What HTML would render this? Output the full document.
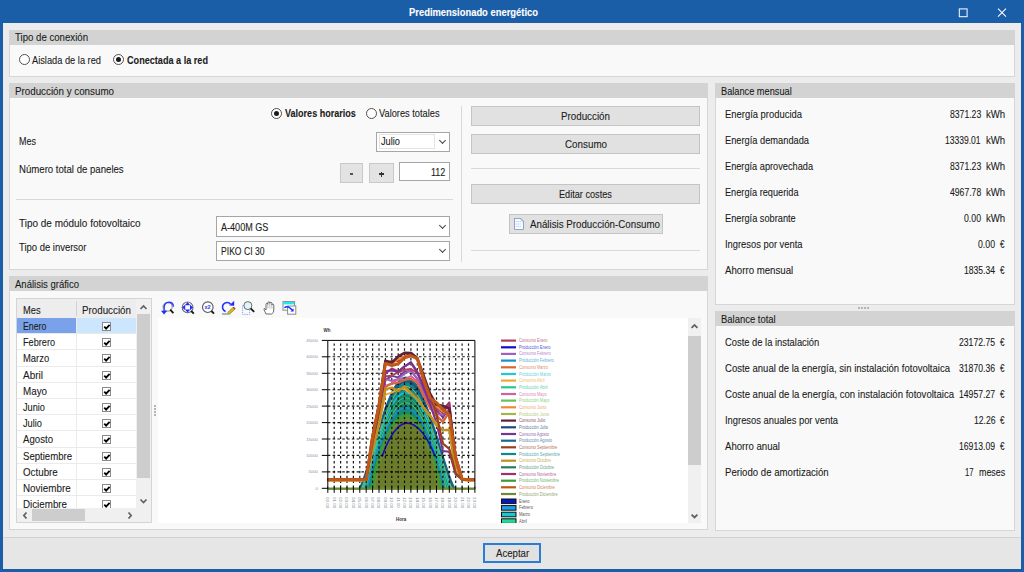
<!DOCTYPE html>
<html><head><meta charset="utf-8">
<style>
*{margin:0;padding:0;box-sizing:border-box}
html,body{width:1024px;height:572px;overflow:hidden;background:#1a5ea8}
body{position:relative;font-family:"Liberation Sans",sans-serif;font-size:11px;color:#1b1b1b;letter-spacing:0}
.a{position:absolute}
.t{position:absolute;white-space:nowrap;line-height:1;-webkit-text-stroke:0.1px currentColor}
#win{position:absolute;left:3px;top:23px;width:1018px;height:546px;background:#ececec}
.grp{position:absolute;background:#f9f9f9;border:1px solid #d9d9d9}
.hdr{position:absolute;left:0;top:0;right:0;height:15px;background:#d3d3d3}
.btn{position:absolute;background:#e1e1e1;border:1px solid #adadad;text-align:center}
.cb{position:absolute;background:#fff;border:1px solid #a8a8a8}
.line{position:absolute;background:#d6d6d6}
.radio{position:absolute;width:11px;height:11px;border:1px solid #505050;border-radius:50%;background:#fff}
.radio.on::after{content:"";position:absolute;left:2px;top:2px;width:5px;height:5px;border-radius:50%;background:#1b1b1b}
.chev{position:absolute;width:5px;height:5px;border-right:1px solid #444;border-bottom:1px solid #444;transform:rotate(45deg)}
</style></head><body>

<div class="a" style="left:3px;top:23px;width:1018px;height:546px;background:#ececec"></div>
<div class="t" style="left:409.00px;top:8.00px;transform-origin:0 50%;transform:scaleX(0.9399);font-size:10px;font-weight:bold;color:#fff;">Predimensionado energético</div>
<svg class="a" style="left:958px;top:8px" width="11" height="11"><rect x="1.3" y="0.9" width="7.8" height="7.8" fill="none" stroke="#fff" stroke-width="1"/></svg>
<svg class="a" style="left:997px;top:8px" width="10" height="10"><path d="M1 0.6L9 8.6M9 0.6L1 8.6" stroke="#fff" stroke-width="1.05"/></svg>
<div class="a" style="left:9px;top:30px;width:1006px;height:47px;background:#f9f9f9;border:1px solid #d6d6d6"></div>
<div class="a" style="left:9px;top:30px;width:1006px;height:15px;background:#d3d3d3"></div>
<div class="t" style="left:15.00px;top:32.00px;transform-origin:0 50%;transform:scaleX(0.8756);">Tipo de conexión</div>
<div class="radio" style="left:19px;top:54px"></div>
<div class="t" style="left:32.00px;top:55.00px;transform-origin:0 50%;transform:scaleX(0.8421);">Aislada de la red</div>
<div class="radio on" style="left:113px;top:54px"></div>
<div class="t" style="left:127.00px;top:55.00px;transform-origin:0 50%;transform:scaleX(0.8281);font-weight:bold;">Conectada a la red</div>
<div class="a" style="left:9px;top:83px;width:699px;height:187px;background:#f9f9f9;border:1px solid #d6d6d6"></div>
<div class="a" style="left:9px;top:83px;width:699px;height:15px;background:#d3d3d3"></div>
<div class="t" style="left:15.00px;top:86.00px;transform-origin:0 50%;transform:scaleX(0.8894);">Producción y consumo</div>
<div class="radio on" style="left:271px;top:108px"></div>
<div class="t" style="left:284.60px;top:108.00px;transform-origin:0 50%;transform:scaleX(0.8215);font-weight:bold;">Valores horarios</div>
<div class="radio" style="left:366px;top:108px"></div>
<div class="t" style="left:379.00px;top:108.00px;transform-origin:0 50%;transform:scaleX(0.8410);">Valores totales</div>
<div class="t" style="left:19.00px;top:136.00px;transform-origin:0 50%;transform:scaleX(0.8168);">Mes</div>
<div class="t" style="left:19.00px;top:164.00px;transform-origin:0 50%;transform:scaleX(0.8734);">Número total de paneles</div>
<div class="a" style="left:376px;top:132px;width:74px;height:20px;background:#fff;border:1px solid #a6a6a6"></div>
<div class="a" style="left:379px;top:134px;width:56px;height:15px;border:1px solid #e3e3e3"></div>
<div class="t" style="left:381.40px;top:136.00px;transform-origin:0 50%;transform:scaleX(0.8398);">Julio</div>
<div class="chev" style="left:440px;top:138px"></div>
<div class="a" style="left:340px;top:163px;width:23px;height:20px;background:#e3e3e3;border:1px solid #c8c8c8"></div>
<div class="a" style="left:350px;top:173px;width:3px;height:2px;background:#555"></div>
<div class="a" style="left:369px;top:163px;width:25px;height:20px;background:#e3e3e3;border:1px solid #c8c8c8"></div>
<div class="a" style="left:379px;top:173.3px;width:5px;height:1.6px;background:#333"></div>
<div class="a" style="left:380.7px;top:171.6px;width:1.6px;height:5px;background:#333"></div>
<div class="a" style="left:399px;top:162px;width:51px;height:19px;background:#fff;border:1px solid #a6a6a6"></div>
<div class="t" style="left:431.20px;top:167.00px;transform-origin:0 50%;transform:scaleX(0.8199);">112</div>
<div class="a" style="left:16px;top:199px;width:437px;height:1px;background:#d9d9d9"></div>
<div class="t" style="left:19.00px;top:218.00px;transform-origin:0 50%;transform:scaleX(0.9066);">Tipo de módulo fotovoltaico</div>
<div class="t" style="left:19.00px;top:242.00px;transform-origin:0 50%;transform:scaleX(0.8606);">Tipo de inversor</div>
<div class="a" style="left:216px;top:216px;width:234px;height:21px;background:#fff;border:1px solid #a6a6a6"></div>
<div class="t" style="left:221.30px;top:222.00px;transform-origin:0 50%;transform:scaleX(0.8235);">A-400M GS</div>
<div class="chev" style="left:440px;top:223px"></div>
<div class="a" style="left:216px;top:241px;width:234px;height:20px;background:#fff;border:1px solid #a6a6a6"></div>
<div class="t" style="left:221.30px;top:246.00px;transform-origin:0 50%;transform:scaleX(0.7820);">PIKO CI 30</div>
<div class="chev" style="left:440px;top:247px"></div>
<div class="a" style="left:461px;top:106px;width:1px;height:156px;background:#d9d9d9"></div>
<div class="a" style="left:471px;top:106px;width:229px;height:20px;background:#e1e1e1;border:1px solid #c4c4c4"></div>
<div class="t" style="left:561.00px;top:111.00px;transform-origin:0 50%;transform:scaleX(0.8899);">Producción</div>
<div class="a" style="left:471px;top:134px;width:229px;height:20px;background:#e1e1e1;border:1px solid #c4c4c4"></div>
<div class="t" style="left:564.50px;top:139.00px;transform-origin:0 50%;transform:scaleX(0.8924);">Consumo</div>
<div class="a" style="left:471px;top:168px;width:229px;height:1px;background:#d9d9d9"></div>
<div class="a" style="left:471px;top:184px;width:229px;height:20px;background:#e1e1e1;border:1px solid #c4c4c4"></div>
<div class="t" style="left:559.10px;top:189.00px;transform-origin:0 50%;transform:scaleX(0.8307);">Editar costes</div>
<div class="a" style="left:509px;top:214px;width:154px;height:20px;background:#e1e1e1;border:1px solid #c4c4c4"></div>
<svg class="a" style="left:513px;top:217px" width="12" height="14"><path d="M1.5 1.5H7.5L10.5 4.5V11.8Q10.5 12.5 9.8 12.5H2.2Q1.5 12.5 1.5 11.8Z" fill="#f8fbff" stroke="#8ea6cc" stroke-width="1.1"/><path d="M3 4.5H8.5M3 7H8.5M3 9.5H8.5" stroke="#b4c4dc" stroke-width="0.8" stroke-dasharray="1.2,0.6"/></svg>
<div class="t" style="left:529.60px;top:219.00px;transform-origin:0 50%;transform:scaleX(0.8859);">Análisis Producción-Consumo</div>
<div class="a" style="left:471px;top:250px;width:229px;height:1px;background:#d9d9d9"></div>
<div class="a" style="left:715px;top:83px;width:300px;height:222px;background:#f9f9f9;border:1px solid #d6d6d6"></div>
<div class="a" style="left:715px;top:83px;width:300px;height:15px;background:#d3d3d3"></div>
<div class="t" style="left:721.00px;top:86.00px;transform-origin:0 50%;transform:scaleX(0.8379);">Balance mensual</div>
<div class="t" style="left:725.00px;top:109.00px;transform-origin:0 50%;transform:scaleX(0.8562);">Energía producida</div>
<div class="t" style="left:949.60px;top:109.00px;transform-origin:0 50%;transform:scaleX(0.7849);">8371.23</div>
<div class="t" style="left:985.70px;top:109.00px;transform-origin:0 50%;transform:scaleX(0.8727);">kWh</div>
<div class="t" style="left:725.00px;top:135.00px;transform-origin:0 50%;transform:scaleX(0.8426);">Energía demandada</div>
<div class="t" style="left:945.20px;top:135.00px;transform-origin:0 50%;transform:scaleX(0.7760);">13339.01</div>
<div class="t" style="left:985.70px;top:135.00px;transform-origin:0 50%;transform:scaleX(0.8727);">kWh</div>
<div class="t" style="left:725.00px;top:161.00px;transform-origin:0 50%;transform:scaleX(0.8366);">Energía aprovechada</div>
<div class="t" style="left:949.60px;top:161.00px;transform-origin:0 50%;transform:scaleX(0.7849);">8371.23</div>
<div class="t" style="left:985.70px;top:161.00px;transform-origin:0 50%;transform:scaleX(0.8727);">kWh</div>
<div class="t" style="left:725.00px;top:187.00px;transform-origin:0 50%;transform:scaleX(0.8346);">Energía requerida</div>
<div class="t" style="left:949.60px;top:187.00px;transform-origin:0 50%;transform:scaleX(0.7849);">4967.78</div>
<div class="t" style="left:985.70px;top:187.00px;transform-origin:0 50%;transform:scaleX(0.8727);">kWh</div>
<div class="t" style="left:725.00px;top:213.00px;transform-origin:0 50%;transform:scaleX(0.8379);">Energía sobrante</div>
<div class="t" style="left:963.80px;top:213.00px;transform-origin:0 50%;transform:scaleX(0.7930);">0.00</div>
<div class="t" style="left:985.70px;top:213.00px;transform-origin:0 50%;transform:scaleX(0.8727);">kWh</div>
<div class="t" style="left:725.00px;top:239.00px;transform-origin:0 50%;transform:scaleX(0.8505);">Ingresos por venta</div>
<div class="t" style="left:978.10px;top:239.00px;transform-origin:0 50%;transform:scaleX(0.7930);">0.00</div>
<div class="t" style="left:1000.40px;top:239.00px;transform-origin:0 50%;transform:scaleX(0.7347);">€</div>
<div class="t" style="left:725.00px;top:265.00px;transform-origin:0 50%;transform:scaleX(0.8786);">Ahorro mensual</div>
<div class="t" style="left:964.10px;top:265.00px;transform-origin:0 50%;transform:scaleX(0.7799);">1835.34</div>
<div class="t" style="left:1000.40px;top:265.00px;transform-origin:0 50%;transform:scaleX(0.7347);">€</div>
<div class="a" style="left:858px;top:307px;width:2px;height:2px;background:#b4b4b4"></div>
<div class="a" style="left:861px;top:307px;width:2px;height:2px;background:#b4b4b4"></div>
<div class="a" style="left:864px;top:307px;width:2px;height:2px;background:#b4b4b4"></div>
<div class="a" style="left:867px;top:307px;width:2px;height:2px;background:#b4b4b4"></div>
<div class="a" style="left:715px;top:311px;width:300px;height:220px;background:#f9f9f9;border:1px solid #d6d6d6"></div>
<div class="a" style="left:715px;top:311px;width:300px;height:15px;background:#d3d3d3"></div>
<div class="t" style="left:721.00px;top:314.00px;transform-origin:0 50%;transform:scaleX(0.8597);">Balance total</div>
<div class="t" style="left:724.70px;top:337.00px;transform-origin:0 50%;transform:scaleX(0.8519);">Coste de la instalación</div>
<div class="t" style="left:959.10px;top:337.00px;transform-origin:0 50%;transform:scaleX(0.7847);">23172.75</div>
<div class="t" style="left:1000.40px;top:337.00px;transform-origin:0 50%;transform:scaleX(0.7347);">€</div>
<div class="t" style="left:724.70px;top:363.00px;transform-origin:0 50%;transform:scaleX(0.8656);">Coste anual de la energía, sin instalación fotovoltaica</div>
<div class="t" style="left:959.10px;top:363.00px;transform-origin:0 50%;transform:scaleX(0.7847);">31870.36</div>
<div class="t" style="left:1000.40px;top:363.00px;transform-origin:0 50%;transform:scaleX(0.7347);">€</div>
<div class="t" style="left:724.70px;top:389.00px;transform-origin:0 50%;transform:scaleX(0.8689);">Coste anual de la energía, con instalación fotovoltaica</div>
<div class="t" style="left:959.10px;top:389.00px;transform-origin:0 50%;transform:scaleX(0.7847);">14957.27</div>
<div class="t" style="left:1000.40px;top:389.00px;transform-origin:0 50%;transform:scaleX(0.7347);">€</div>
<div class="t" style="left:724.70px;top:415.00px;transform-origin:0 50%;transform:scaleX(0.8516);">Ingresos anuales por venta</div>
<div class="t" style="left:973.60px;top:415.00px;transform-origin:0 50%;transform:scaleX(0.7818);">12.26</div>
<div class="t" style="left:1000.40px;top:415.00px;transform-origin:0 50%;transform:scaleX(0.7347);">€</div>
<div class="t" style="left:724.70px;top:441.00px;transform-origin:0 50%;transform:scaleX(0.8730);">Ahorro anual</div>
<div class="t" style="left:959.10px;top:441.00px;transform-origin:0 50%;transform:scaleX(0.7847);">16913.09</div>
<div class="t" style="left:1000.40px;top:441.00px;transform-origin:0 50%;transform:scaleX(0.7347);">€</div>
<div class="t" style="left:724.70px;top:467.00px;transform-origin:0 50%;transform:scaleX(0.8742);">Periodo de amortización</div>
<div class="t" style="left:964.50px;top:467.00px;transform-origin:0 50%;transform:scaleX(0.7020);">17</div>
<div class="t" style="left:978.70px;top:467.00px;transform-origin:0 50%;transform:scaleX(0.8093);">meses</div>
<div class="a" style="left:9px;top:276px;width:699px;height:254px;background:#f9f9f9;border:1px solid #d6d6d6"></div>
<div class="a" style="left:9px;top:276px;width:699px;height:15px;background:#d3d3d3"></div>
<div class="t" style="left:15.00px;top:279.00px;transform-origin:0 50%;transform:scaleX(0.8649);">Análisis gráfico</div>

<div class="a" style="left:16px;top:298px;width:136px;height:225px;background:#fff;border:1px solid #d4d4d4"></div>
<div class="a" style="left:17px;top:299px;width:119px;height:19px;background:#ededed"></div>
<div class="a" style="left:76px;top:301px;width:1px;height:15px;background:#d2d2d2"></div>
<div class="t" style="left:23.40px;top:305.00px;transform-origin:0 50%;transform:scaleX(0.8456);">Mes</div>
<div class="t" style="left:82.30px;top:305.00px;transform-origin:0 50%;transform:scaleX(0.8899);">Producción</div>
<div class="a" style="left:0;top:0;width:1024px;height:572px;clip-path:inset(317px 888px 64px 17px)">
<div class="a" style="left:17px;top:318px;width:59px;height:16px;background:#7aa2ea"></div>
<div class="a" style="left:76px;top:318px;width:60px;height:16px;background:#cce6fd"></div>
<div class="a" style="left:17px;top:333px;width:119px;height:1px;background:#ebebeb"></div>
<div class="t" style="left:23.30px;top:321.00px;transform-origin:0 50%;transform:scaleX(0.7966);">Enero</div>
<div class="a" style="left:102px;top:321.90px;width:9px;height:9px;border:1px solid #8a8a8a;background:#fff"></div>
<svg class="a" style="left:103px;top:322.90px" width="8" height="8"><path d="M1.3 3.6L3.1 5.6L6.6 1.8" stroke="#000" stroke-width="1.8" fill="none"/></svg>
<div class="a" style="left:17px;top:349px;width:119px;height:1px;background:#ebebeb"></div>
<div class="t" style="left:23.30px;top:337.00px;transform-origin:0 50%;transform:scaleX(0.8312);">Febrero</div>
<div class="a" style="left:102px;top:338.10px;width:9px;height:9px;border:1px solid #8a8a8a;background:#fff"></div>
<svg class="a" style="left:103px;top:339.10px" width="8" height="8"><path d="M1.3 3.6L3.1 5.6L6.6 1.8" stroke="#000" stroke-width="1.8" fill="none"/></svg>
<div class="a" style="left:17px;top:366px;width:119px;height:1px;background:#ebebeb"></div>
<div class="t" style="left:23.30px;top:353.00px;transform-origin:0 50%;transform:scaleX(0.8573);">Marzo</div>
<div class="a" style="left:102px;top:354.30px;width:9px;height:9px;border:1px solid #8a8a8a;background:#fff"></div>
<svg class="a" style="left:103px;top:355.30px" width="8" height="8"><path d="M1.3 3.6L3.1 5.6L6.6 1.8" stroke="#000" stroke-width="1.8" fill="none"/></svg>
<div class="a" style="left:17px;top:382px;width:119px;height:1px;background:#ebebeb"></div>
<div class="t" style="left:23.30px;top:370.00px;transform-origin:0 50%;transform:scaleX(0.9091);">Abril</div>
<div class="a" style="left:102px;top:370.50px;width:9px;height:9px;border:1px solid #8a8a8a;background:#fff"></div>
<svg class="a" style="left:103px;top:371.50px" width="8" height="8"><path d="M1.3 3.6L3.1 5.6L6.6 1.8" stroke="#000" stroke-width="1.8" fill="none"/></svg>
<div class="a" style="left:17px;top:398px;width:119px;height:1px;background:#ebebeb"></div>
<div class="t" style="left:23.30px;top:386.00px;transform-origin:0 50%;transform:scaleX(0.8930);">Mayo</div>
<div class="a" style="left:102px;top:386.70px;width:9px;height:9px;border:1px solid #8a8a8a;background:#fff"></div>
<svg class="a" style="left:103px;top:387.70px" width="8" height="8"><path d="M1.3 3.6L3.1 5.6L6.6 1.8" stroke="#000" stroke-width="1.8" fill="none"/></svg>
<div class="a" style="left:17px;top:414px;width:119px;height:1px;background:#ebebeb"></div>
<div class="t" style="left:23.30px;top:402.00px;transform-origin:0 50%;transform:scaleX(0.8361);">Junio</div>
<div class="a" style="left:102px;top:402.90px;width:9px;height:9px;border:1px solid #8a8a8a;background:#fff"></div>
<svg class="a" style="left:103px;top:403.90px" width="8" height="8"><path d="M1.3 3.6L3.1 5.6L6.6 1.8" stroke="#000" stroke-width="1.8" fill="none"/></svg>
<div class="a" style="left:17px;top:430px;width:119px;height:1px;background:#ebebeb"></div>
<div class="t" style="left:23.30px;top:418.00px;transform-origin:0 50%;transform:scaleX(0.8398);">Julio</div>
<div class="a" style="left:102px;top:419.10px;width:9px;height:9px;border:1px solid #8a8a8a;background:#fff"></div>
<svg class="a" style="left:103px;top:420.10px" width="8" height="8"><path d="M1.3 3.6L3.1 5.6L6.6 1.8" stroke="#000" stroke-width="1.8" fill="none"/></svg>
<div class="a" style="left:17px;top:447px;width:119px;height:1px;background:#ebebeb"></div>
<div class="t" style="left:23.30px;top:434.00px;transform-origin:0 50%;transform:scaleX(0.8759);">Agosto</div>
<div class="a" style="left:102px;top:435.30px;width:9px;height:9px;border:1px solid #8a8a8a;background:#fff"></div>
<svg class="a" style="left:103px;top:436.30px" width="8" height="8"><path d="M1.3 3.6L3.1 5.6L6.6 1.8" stroke="#000" stroke-width="1.8" fill="none"/></svg>
<div class="a" style="left:17px;top:463px;width:119px;height:1px;background:#ebebeb"></div>
<div class="t" style="left:23.30px;top:451.00px;transform-origin:0 50%;transform:scaleX(0.8711);">Septiembre</div>
<div class="a" style="left:102px;top:451.50px;width:9px;height:9px;border:1px solid #8a8a8a;background:#fff"></div>
<svg class="a" style="left:103px;top:452.50px" width="8" height="8"><path d="M1.3 3.6L3.1 5.6L6.6 1.8" stroke="#000" stroke-width="1.8" fill="none"/></svg>
<div class="a" style="left:17px;top:479px;width:119px;height:1px;background:#ebebeb"></div>
<div class="t" style="left:23.30px;top:467.00px;transform-origin:0 50%;transform:scaleX(0.8895);">Octubre</div>
<div class="a" style="left:102px;top:467.70px;width:9px;height:9px;border:1px solid #8a8a8a;background:#fff"></div>
<svg class="a" style="left:103px;top:468.70px" width="8" height="8"><path d="M1.3 3.6L3.1 5.6L6.6 1.8" stroke="#000" stroke-width="1.8" fill="none"/></svg>
<div class="a" style="left:17px;top:495px;width:119px;height:1px;background:#ebebeb"></div>
<div class="t" style="left:23.30px;top:483.00px;transform-origin:0 50%;transform:scaleX(0.8968);">Noviembre</div>
<div class="a" style="left:102px;top:483.90px;width:9px;height:9px;border:1px solid #8a8a8a;background:#fff"></div>
<svg class="a" style="left:103px;top:484.90px" width="8" height="8"><path d="M1.3 3.6L3.1 5.6L6.6 1.8" stroke="#000" stroke-width="1.8" fill="none"/></svg>
<div class="a" style="left:17px;top:511px;width:119px;height:1px;background:#ebebeb"></div>
<div class="t" style="left:23.30px;top:499.00px;transform-origin:0 50%;transform:scaleX(0.8889);">Diciembre</div>
<div class="a" style="left:102px;top:500.10px;width:9px;height:9px;border:1px solid #8a8a8a;background:#fff"></div>
<svg class="a" style="left:103px;top:501.10px" width="8" height="8"><path d="M1.3 3.6L3.1 5.6L6.6 1.8" stroke="#000" stroke-width="1.8" fill="none"/></svg>
<div class="a" style="left:76px;top:317px;width:1px;height:191px;background:#ebebeb"></div>
</div>
<div class="a" style="left:136px;top:299px;width:15px;height:223px;background:#f0f0f0"></div>
<div class="a" style="left:137px;top:314px;width:13px;height:164px;background:#cdcdcd"></div>
<svg class="a" style="left:138px;top:304px" width="11" height="7"><path d="M2.5 5L5.5 2L8.5 5" stroke="#606060" stroke-width="1.7" fill="none"/></svg>
<svg class="a" style="left:138px;top:498px" width="11" height="7"><path d="M2.5 1.5L5.5 4.5L8.5 1.5" stroke="#606060" stroke-width="1.7" fill="none"/></svg>
<div class="a" style="left:17px;top:508px;width:134px;height:14px;background:#f0f0f0"></div>
<div class="a" style="left:32px;top:509px;width:53px;height:12px;background:#cdcdcd"></div>
<svg class="a" style="left:22px;top:511px" width="6" height="9"><path d="M4.5 1.5L1.8 4.5L4.5 7.5" stroke="#606060" stroke-width="1.7" fill="none"/></svg>
<svg class="a" style="left:127px;top:511px" width="6" height="9"><path d="M1.5 1.5L4.2 4.5L1.5 7.5" stroke="#606060" stroke-width="1.7" fill="none"/></svg>
<div class="a" style="left:154px;top:405px;width:2px;height:2px;background:#b4b4b4"></div>
<div class="a" style="left:154px;top:408px;width:2px;height:2px;background:#b4b4b4"></div>
<div class="a" style="left:154px;top:411px;width:2px;height:2px;background:#b4b4b4"></div>
<div class="a" style="left:154px;top:414px;width:2px;height:2px;background:#b4b4b4"></div>
<div class="a" style="left:158px;top:318px;width:530px;height:205px;background:#fff"></div>
<div class="a" style="left:688px;top:318px;width:13px;height:205px;background:#f0f0f0"></div>
<div class="a" style="left:688px;top:336px;width:13px;height:129px;background:#cdcdcd"></div>
<svg class="a" style="left:689px;top:322px" width="11" height="8"><path d="M2.6 5.8L5.5 2.9L8.4 5.8" stroke="#606060" stroke-width="1.8" fill="none"/></svg>
<svg class="a" style="left:689px;top:512px" width="11" height="8"><path d="M2.6 2.6L5.5 5.5L8.4 2.6" stroke="#606060" stroke-width="1.8" fill="none"/></svg>

<svg class="a" style="left:160px;top:300px" width="140" height="16">
 <circle cx="7.8" cy="6.8" r="4.4" fill="#fafafa" stroke="#8a8a8a" stroke-width="1"/>
 <path d="M10.2 9.6L13.4 13.2" stroke="#1a1a1a" stroke-width="1.8"/>
 <path d="M13.4 6.8 Q13.4 2.2 9 2.2 Q4.4 2.4 4.2 7 L4 11" stroke="#2a3cff" stroke-width="1.4" fill="none"/>
 <path d="M1 10.8L7.2 10.8L4 14.6Z" fill="#1f2cff"/>
 <path d="M4.6 3.2A4.4 4.4 0 0 0 4.6 10.4" stroke="#8a8a8a" stroke-width="0.8" fill="none" opacity="0.6"/>

 <circle cx="27.6" cy="7.4" r="5.4" fill="#fff" stroke="#6a6a6a" stroke-width="1.1"/>
 <path d="M27.6 2.2L30.4 5.2L24.8 5.2Z M27.6 12.6L30.4 9.6L24.8 9.6Z M22.2 7.4L25.2 4.6L25.2 10.2Z M33 7.4L30 4.6L30 10.2Z" fill="#1f2cff"/>
 <circle cx="27.6" cy="7.4" r="1.3" fill="#fff"/>
 <path d="M31.2 11L33.8 13.6" stroke="#1a1a1a" stroke-width="1.8"/>

 <circle cx="47.8" cy="7.2" r="5.3" fill="#fff" stroke="#5a5a5a" stroke-width="1.1"/>
 <text x="44.4" y="9.4" font-size="5.6" fill="#2a3cff" font-family="Liberation Sans" font-weight="bold">x2</text>
 <path d="M51.4 11L54 13.6" stroke="#1a1a1a" stroke-width="1.8"/>

 <path d="M65.6 11.5 A4.6 4.6 0 1 1 70.6 4.2" stroke="#1f2cff" stroke-width="1.6" fill="none"/>
 <path d="M69.2 5.4L74.2 0.8L74.2 5.8Z" fill="#1f2cff"/>
 <path d="M67.6 12.4L72.8 7.6L74.8 9.4L69.6 14.2Z" fill="#c8c020" stroke="#707010" stroke-width="0.5"/>
 <path d="M72.8 7.6L73.8 6.8L75.6 8.6L74.8 9.4Z" fill="#e02020"/>
 <path d="M62 14H69" stroke="#8a8a8a" stroke-width="1.3"/>

 <rect x="82.6" y="5.6" width="7" height="8.8" fill="none" stroke="#8a96ff" stroke-width="1" stroke-dasharray="1.2,1"/>
 <circle cx="87.9" cy="5.6" r="4" fill="#dff4fa" stroke="#6a6a6a" stroke-width="1"/>
 <path d="M90.6 8.3L94.2 11.9" stroke="#1a1a1a" stroke-width="1.8"/>

 <path d="M106 14 L104 9.6 Q103.6 8.3 104.8 8.6 L106 10 V4.4 Q106 3.3 107 3.3 Q107.8 3.3 107.8 4.4 V3 Q107.8 1.8 108.9 1.8 Q109.9 1.8 109.9 3 V3.4 Q109.9 2.3 110.9 2.3 Q111.9 2.3 111.9 3.5 V5 Q111.9 4.1 112.8 4.1 Q113.8 4.1 113.8 5.3 V10 Q113.8 13 111.6 14 Z" fill="#fff" stroke="#5a5a5a" stroke-width="0.9"/>
 <path d="M107.8 4.4V8.4M109.9 3.4V8.4M111.9 5V8.6" stroke="#8a8a8a" stroke-width="0.6"/>

 <rect x="123" y="1.6" width="11.6" height="8.6" fill="#fff" stroke="#8a8a8a" stroke-width="1"/>
 <rect x="123.5" y="2" width="10.6" height="2.4" fill="#20e8f0"/>
 <rect x="127.6" y="6" width="8.2" height="8.2" fill="#fff" stroke="#8a8a8a" stroke-width="1"/>
 <path d="M124.4 7.8 Q127 5.6 130 8 L132.6 10.4" stroke="#1f2cff" stroke-width="1.5" fill="none"/>
 <path d="M130.4 11.6L133.6 11.6L133.6 8.4Z" fill="#1f2cff"/>
</svg>
<svg class="a" style="left:158px;top:318px" width="530" height="205" viewBox="158 318 530 205">
<polygon points="359.1,488.3 360.3,486.3 361.5,483.5 362.7,480.4 363.9,477.0 365.1,473.4 366.3,469.7 367.5,465.8 368.7,461.9 369.9,457.8 371.1,453.8 372.3,449.7 373.5,445.6 374.7,441.5 375.9,437.4 377.1,433.4 378.3,429.4 379.5,425.5 380.7,421.7 381.9,418.0 383.1,414.3 384.3,410.8 385.5,407.4 386.7,404.2 387.9,401.1 389.1,398.2 390.3,395.4 391.5,392.8 392.7,390.3 393.9,388.1 395.1,386.1 396.3,384.2 397.5,382.6 398.7,381.2 399.9,379.9 401.1,379.0 402.3,378.2 403.5,377.6 404.7,377.3 405.9,377.2 407.1,377.3 408.3,377.6 409.5,378.2 410.7,378.9 411.9,379.8 413.1,380.9 414.3,382.2 415.5,383.7 416.7,385.4 417.9,387.3 419.1,389.3 420.3,391.5 421.5,393.9 422.7,396.5 423.9,399.2 425.1,402.0 426.3,405.0 427.5,408.1 428.7,411.3 429.9,414.7 431.1,418.1 432.3,421.7 433.5,425.3 434.7,429.0 435.9,432.7 437.1,436.5 438.3,440.4 439.5,444.3 440.7,448.1 441.9,452.0 443.1,455.9 444.3,459.7 445.5,463.5 446.7,467.2 447.9,470.8 449.1,474.4 450.3,477.7 451.5,480.9 452.7,483.8 453.9,486.4 455.1,488.3" fill="#1a6890" stroke="#1a6890" stroke-width="1.2"/>
<polygon points="359.8,488.3 361.0,486.3 362.1,483.6 363.3,480.6 364.5,477.3 365.7,473.7 366.8,470.1 368.0,466.3 369.2,462.4 370.4,458.5 371.5,454.5 372.7,450.5 373.9,446.5 375.1,442.5 376.2,438.5 377.4,434.6 378.6,430.7 379.8,426.9 380.9,423.1 382.1,419.5 383.3,415.9 384.5,412.4 385.6,409.1 386.8,405.9 388.0,402.8 389.2,399.9 390.3,397.2 391.5,394.6 392.7,392.2 393.9,390.0 395.0,387.9 396.2,386.1 397.4,384.5 398.6,383.0 399.7,381.8 400.9,380.8 402.1,380.0 403.3,379.4 404.4,379.0 405.6,378.9 406.8,378.9 408.0,379.2 409.1,379.7 410.3,380.3 411.5,381.2 412.7,382.3 413.8,383.5 415.0,385.0 416.2,386.6 417.4,388.4 418.5,390.4 419.7,392.6 420.9,394.9 422.1,397.4 423.2,400.1 424.4,402.8 425.6,405.8 426.8,408.8 427.9,412.0 429.1,415.3 430.3,418.7 431.5,422.2 432.6,425.8 433.8,429.5 435.0,433.2 436.2,437.0 437.3,440.8 438.5,444.6 439.7,448.5 440.9,452.3 442.0,456.1 443.2,459.9 444.4,463.7 445.6,467.4 446.7,471.0 447.9,474.5 449.1,477.8 450.3,481.0 451.4,483.9 452.6,486.4 453.8,488.3" fill="#1b5a80" stroke="#1b5a80" stroke-width="1.2"/>
<polygon points="361.1,488.3 362.2,486.1 363.3,483.2 364.5,480.0 365.6,476.7 366.8,473.1 367.9,469.5 369.1,465.8 370.2,462.0 371.3,458.1 372.5,454.3 373.6,450.4 374.8,446.6 375.9,442.7 377.1,438.9 378.2,435.2 379.3,431.5 380.5,427.9 381.6,424.3 382.8,420.9 383.9,417.5 385.1,414.3 386.2,411.2 387.4,408.2 388.5,405.3 389.6,402.6 390.8,400.1 391.9,397.7 393.1,395.4 394.2,393.4 395.4,391.5 396.5,389.8 397.6,388.3 398.8,386.9 399.9,385.8 401.1,384.9 402.2,384.1 403.4,383.6 404.5,383.3 405.6,383.1 406.8,383.2 407.9,383.4 409.1,383.9 410.2,384.5 411.4,385.3 412.5,386.3 413.6,387.5 414.8,388.8 415.9,390.3 417.1,392.0 418.2,393.8 419.4,395.9 420.5,398.0 421.6,400.3 422.8,402.8 423.9,405.4 425.1,408.1 426.2,411.0 427.4,414.0 428.5,417.1 429.7,420.3 430.8,423.6 431.9,426.9 433.1,430.4 434.2,433.9 435.4,437.5 436.5,441.1 437.7,444.8 438.8,448.5 439.9,452.2 441.1,455.9 442.2,459.6 443.4,463.2 444.5,466.8 445.7,470.4 446.8,473.9 447.9,477.2 449.1,480.4 450.2,483.5 451.4,486.2 452.5,488.3" fill="#108890" stroke="#108890" stroke-width="1.2"/>
<polygon points="362.3,488.3 363.4,485.5 364.5,482.3 365.6,479.0 366.7,475.5 367.9,472.0 369.0,468.4 370.1,464.8 371.2,461.2 372.3,457.7 373.4,454.1 374.5,450.5 375.6,447.0 376.7,443.5 377.8,440.1 378.9,436.8 380.0,433.5 381.1,430.3 382.2,427.2 383.3,424.2 384.4,421.2 385.5,418.4 386.6,415.7 387.7,413.1 388.8,410.7 389.9,408.3 391.0,406.1 392.1,404.1 393.2,402.1 394.3,400.4 395.4,398.7 396.5,397.3 397.6,396.0 398.7,394.8 399.8,393.8 401.0,393.0 402.1,392.3 403.2,391.8 404.3,391.5 405.4,391.4 406.5,391.4 407.6,391.5 408.7,391.9 409.8,392.4 410.9,393.0 412.0,393.8 413.1,394.8 414.2,395.9 415.3,397.2 416.4,398.6 417.5,400.1 418.6,401.8 419.7,403.7 420.8,405.6 421.9,407.7 423.0,410.0 424.1,412.3 425.2,414.8 426.3,417.4 427.4,420.1 428.5,422.9 429.6,425.8 430.7,428.8 431.8,431.8 432.9,435.0 434.0,438.2 435.2,441.5 436.3,444.8 437.4,448.2 438.5,451.6 439.6,455.1 440.7,458.6 441.8,462.1 442.9,465.6 444.0,469.0 445.1,472.5 446.2,475.9 447.3,479.2 448.4,482.5 449.5,485.6 450.6,488.3+0.0j" fill="#1a9a9a" stroke="#1a9a9a" stroke-width="1.2"/>
<polygon points="363.6,488.3 364.7,484.6 365.8,480.8 366.8,477.1 367.9,473.4 369.0,469.8 370.0,466.1 371.1,462.5 372.2,458.9 373.3,455.4 374.3,451.9 375.4,448.5 376.5,445.2 377.5,441.9 378.6,438.7 379.7,435.6 380.8,432.5 381.8,429.6 382.9,426.7 384.0,423.9 385.0,421.3 386.1,418.7 387.2,416.3 388.3,414.0 389.3,411.7 390.4,409.7 391.5,407.7 392.5,405.8 393.6,404.1 394.7,402.6 395.8,401.1 396.8,399.8 397.9,398.7 399.0,397.7 400.0,396.8 401.1,396.1 402.2,395.5 403.3,395.1 404.3,394.8 405.4,394.6 406.5,394.7 407.5,394.8 408.6,395.1 409.7,395.5 410.8,396.1 411.8,396.8 412.9,397.7 414.0,398.6 415.0,399.8 416.1,401.0 417.2,402.4 418.3,403.9 419.3,405.5 420.4,407.3 421.5,409.2 422.5,411.2 423.6,413.3 424.7,415.5 425.7,417.9 426.8,420.3 427.9,422.8 429.0,425.5 430.0,428.2 431.1,431.0 432.2,433.9 433.2,436.9 434.3,440.0 435.4,443.1 436.5,446.4 437.5,449.6 438.6,453.0 439.7,456.3 440.7,459.8 441.8,463.2 442.9,466.7 444.0,470.3 445.0,473.9 446.1,477.5 447.2,481.1 448.2,484.7 449.3,488.3" fill="#208060" stroke="#208060" stroke-width="1.2"/>
<polygon points="364.9,488.3 365.9,484.2 367.0,480.3 368.0,476.6 369.0,473.0 370.1,469.4 371.1,465.9 372.1,462.4 373.1,459.0 374.2,455.7 375.2,452.4 376.2,449.2 377.3,446.1 378.3,443.1 379.3,440.1 380.4,437.2 381.4,434.4 382.4,431.7 383.5,429.0 384.5,426.5 385.5,424.1 386.6,421.7 387.6,419.5 388.6,417.4 389.6,415.4 390.7,413.5 391.7,411.7 392.7,410.0 393.8,408.4 394.8,407.0 395.8,405.7 396.9,404.5 397.9,403.4 398.9,402.5 400.0,401.7 401.0,401.0 402.0,400.5 403.1,400.0 404.1,399.7 405.1,399.6 406.1,399.6 407.2,399.7 408.2,399.9 409.2,400.3 410.3,400.7 411.3,401.4 412.3,402.1 413.4,403.0 414.4,403.9 415.4,405.1 416.5,406.3 417.5,407.6 418.5,409.1 419.6,410.7 420.6,412.4 421.6,414.2 422.6,416.1 423.7,418.1 424.7,420.3 425.7,422.5 426.8,424.8 427.8,427.2 428.8,429.8 429.9,432.4 430.9,435.1 431.9,437.9 433.0,440.7 434.0,443.7 435.0,446.7 436.1,449.8 437.1,452.9 438.1,456.1 439.1,459.4 440.2,462.8 441.2,466.2 442.2,469.6 443.3,473.2 444.3,476.8 445.3,480.5 446.4,484.2 447.4,488.3" fill="#1f8f6a" stroke="#1f8f6a" stroke-width="1.2"/>
<polygon points="367.5,488.3 368.4,483.8 369.4,479.9 370.4,476.2 371.3,472.7 372.3,469.3 373.3,466.0 374.2,462.7 375.2,459.5 376.2,456.5 377.1,453.4 378.1,450.5 379.1,447.7 380.0,444.9 381.0,442.2 382.0,439.6 382.9,437.0 383.9,434.6 384.9,432.2 385.8,430.0 386.8,427.8 387.8,425.7 388.7,423.7 389.7,421.8 390.7,420.1 391.6,418.4 392.6,416.8 393.6,415.3 394.5,413.9 395.5,412.7 396.5,411.5 397.4,410.5 398.4,409.5 399.4,408.7 400.3,408.0 401.3,407.4 402.3,406.9 403.2,406.5 404.2,406.3 405.2,406.2 406.1,406.1 407.1,406.2 408.1,406.4 409.0,406.8 410.0,407.2 411.0,407.7 412.0,408.4 412.9,409.1 413.9,410.0 414.9,411.0 415.8,412.1 416.8,413.3 417.8,414.5 418.7,415.9 419.7,417.4 420.7,419.0 421.6,420.7 422.6,422.5 423.6,424.4 424.5,426.4 425.5,428.5 426.5,430.7 427.4,432.9 428.4,435.3 429.4,437.7 430.3,440.2 431.3,442.8 432.3,445.5 433.2,448.2 434.2,451.0 435.2,453.9 436.1,456.9 437.1,459.9 438.1,463.1 439.0,466.3 440.0,469.6 441.0,472.9 441.9,476.4 442.9,480.0 443.9,483.9 444.8,488.3" fill="#178a70" stroke="#178a70" stroke-width="1.2"/>
<polygon points="371.3,488.3 372.2,481.7 373.0,477.2 373.9,473.3 374.8,469.7 375.7,466.3 376.6,463.1 377.4,460.1 378.3,457.2 379.2,454.5 380.1,451.8 381.0,449.3 381.8,446.9 382.7,444.5 383.6,442.3 384.5,440.1 385.4,438.1 386.2,436.1 387.1,434.2 388.0,432.4 388.9,430.7 389.8,429.0 390.6,427.5 391.5,426.0 392.4,424.6 393.3,423.3 394.2,422.1 395.0,421.0 395.9,420.0 396.8,419.0 397.7,418.2 398.6,417.4 399.4,416.7 400.3,416.1 401.2,415.6 402.1,415.2 402.9,414.8 403.8,414.6 404.7,414.4 405.6,414.4 406.5,414.4 407.3,414.5 408.2,414.7 409.1,414.9 410.0,415.3 410.9,415.7 411.7,416.2 412.6,416.8 413.5,417.5 414.4,418.2 415.3,419.1 416.1,420.0 417.0,421.0 417.9,422.1 418.8,423.2 419.7,424.5 420.5,425.8 421.4,427.2 422.3,428.7 423.2,430.2 424.1,431.9 424.9,433.6 425.8,435.4 426.7,437.3 427.6,439.2 428.5,441.3 429.3,443.4 430.2,445.6 431.1,447.9 432.0,450.3 432.8,452.8 433.7,455.4 434.6,458.0 435.5,460.9 436.4,463.8 437.2,466.9 438.1,470.2 439.0,473.7 439.9,477.5 440.8,481.9 441.6,488.3" fill="#409838" stroke="#409838" stroke-width="1.2"/>
<polyline points="361.7,488.3 362.8,485.8 364.0,482.7 365.1,479.4 366.2,475.9 367.3,472.4 368.5,468.7 369.6,465.0 370.7,461.3 371.8,457.5 373.0,453.7 374.1,450.0 375.2,446.3 376.4,442.6 377.5,438.9 378.6,435.3 379.7,431.8 380.9,428.4 382.0,425.0 383.1,421.7 384.2,418.6 385.4,415.5 386.5,412.6 387.6,409.8 388.8,407.1 389.9,404.6 391.0,402.2 392.1,399.9 393.3,397.9 394.4,395.9 395.5,394.2 396.6,392.6 397.8,391.2 398.9,390.0 400.0,388.9 401.2,388.0 402.3,387.3 403.4,386.8 404.5,386.5 405.7,386.4 406.8,386.5 407.9,386.7 409.0,387.1 410.2,387.7 411.3,388.4 412.4,389.4 413.5,390.4 414.7,391.7 415.8,393.1 416.9,394.7 418.1,396.4 419.2,398.3 420.3,400.3 421.4,402.5 422.6,404.8 423.7,407.2 424.8,409.8 425.9,412.5 427.1,415.3 428.2,418.2 429.3,421.2 430.5,424.3 431.6,427.5 432.7,430.8 433.8,434.2 435.0,437.6 436.1,441.0 437.2,444.6 438.3,448.1 439.5,451.7 440.6,455.3 441.7,458.9 442.9,462.5 444.0,466.1 445.1,469.6 446.2,473.1 447.4,476.5 448.5,479.8 449.6,483.0 450.7,485.9 451.9,488.3" fill="none" stroke="#a0b848" stroke-width="1.0"/>
<polyline points="363.0,488.3 364.1,485.1 365.2,481.6 366.2,478.1 367.3,474.5 368.4,470.9 369.5,467.3 370.6,463.7 371.7,460.1 372.8,456.5 373.8,453.0 374.9,449.5 376.0,446.1 377.1,442.7 378.2,439.4 379.3,436.2 380.4,433.0 381.5,429.9 382.5,426.9 383.6,424.0 384.7,421.3 385.8,418.6 386.9,416.0 388.0,413.5 389.1,411.2 390.2,409.0 391.2,406.9 392.3,404.9 393.4,403.1 394.5,401.5 395.6,399.9 396.7,398.6 397.8,397.3 398.9,396.2 399.9,395.3 401.0,394.5 402.1,393.9 403.2,393.4 404.3,393.1 405.4,393.0 406.5,393.0 407.6,393.2 408.6,393.5 409.7,393.9 410.8,394.6 411.9,395.3 413.0,396.2 414.1,397.3 415.2,398.5 416.3,399.8 417.3,401.3 418.4,402.9 419.5,404.6 420.6,406.5 421.7,408.5 422.8,410.6 423.9,412.8 424.9,415.2 426.0,417.6 427.1,420.2 428.2,422.9 429.3,425.6 430.4,428.5 431.5,431.4 432.6,434.5 433.6,437.6 434.7,440.7 435.8,444.0 436.9,447.3 438.0,450.6 439.1,454.0 440.2,457.5 441.3,460.9 442.3,464.4 443.4,467.9 444.5,471.4 445.6,474.9 446.7,478.4 447.8,481.8 448.9,485.2 450.0,488.3" fill="none" stroke="#20c8d8" stroke-width="1.2"/>
<polyline points="364.3,488.3 365.3,484.7 366.3,481.2 367.4,477.6 368.4,474.1 369.5,470.5 370.5,467.0 371.6,463.6 372.6,460.2 373.7,456.8 374.7,453.5 375.8,450.2 376.8,447.0 377.9,443.8 378.9,440.7 380.0,437.7 381.0,434.8 382.1,432.0 383.1,429.2 384.2,426.6 385.2,424.0 386.2,421.5 387.3,419.2 388.3,416.9 389.4,414.8 390.4,412.8 391.5,410.9 392.5,409.1 393.6,407.4 394.6,405.9 395.7,404.5 396.7,403.2 397.8,402.1 398.8,401.1 399.9,400.2 400.9,399.5 402.0,398.9 403.0,398.4 404.1,398.1 405.1,398.0 406.1,397.9 407.2,398.0 408.2,398.3 409.3,398.7 410.3,399.2 411.4,399.8 412.4,400.6 413.5,401.6 414.5,402.6 415.6,403.8 416.6,405.1 417.7,406.5 418.7,408.1 419.8,409.8 420.8,411.6 421.9,413.5 422.9,415.6 424.0,417.7 425.0,420.0 426.0,422.3 427.1,424.8 428.1,427.3 429.2,430.0 430.2,432.7 431.3,435.5 432.3,438.4 433.4,441.4 434.4,444.4 435.5,447.6 436.5,450.7 437.6,454.0 438.6,457.2 439.7,460.6 440.7,463.9 441.8,467.4 442.8,470.8 443.8,474.3 444.9,477.8 445.9,481.3 447.0,484.8 448.0,488.3" fill="none" stroke="#28c890" stroke-width="1.0"/>
<polyline points="366.2,488.3 367.2,484.3 368.2,480.6 369.2,477.0 370.2,473.5 371.2,470.1 372.2,466.7 373.2,463.4 374.2,460.1 375.2,456.9 376.2,453.7 377.2,450.7 378.2,447.7 379.2,444.7 380.2,441.9 381.2,439.1 382.2,436.4 383.2,433.8 384.2,431.2 385.2,428.8 386.2,426.5 387.2,424.2 388.2,422.1 389.2,420.0 390.2,418.1 391.2,416.2 392.2,414.5 393.2,412.9 394.2,411.4 395.2,410.0 396.2,408.7 397.2,407.6 398.2,406.6 399.2,405.7 400.2,404.9 401.2,404.2 402.1,403.7 403.1,403.3 404.1,403.0 405.1,402.9 406.1,402.9 407.1,403.0 408.1,403.2 409.1,403.5 410.1,404.0 411.1,404.6 412.1,405.3 413.1,406.1 414.1,407.1 415.1,408.1 416.1,409.3 417.1,410.6 418.1,412.0 419.1,413.6 420.1,415.2 421.1,416.9 422.1,418.8 423.1,420.7 424.1,422.8 425.1,424.9 426.1,427.2 427.1,429.5 428.1,431.9 429.1,434.5 430.1,437.1 431.1,439.7 432.1,442.5 433.1,445.3 434.1,448.2 435.1,451.2 436.1,454.2 437.1,457.3 438.1,460.5 439.1,463.7 440.1,467.0 441.1,470.3 442.1,473.7 443.1,477.2 444.1,480.7 445.1,484.4 446.1,488.3" fill="none" stroke="#68c058" stroke-width="1.0"/>
<polyline points="367.5,488.3 368.4,483.2 369.4,479.0 370.3,475.3 371.3,471.7 372.2,468.2 373.2,464.9 374.2,461.7 375.1,458.6 376.1,455.6 377.0,452.7 378.0,449.9 379.0,447.1 379.9,444.5 380.9,441.9 381.8,439.4 382.8,437.0 383.8,434.7 384.7,432.5 385.7,430.4 386.6,428.3 387.6,426.4 388.6,424.5 389.5,422.7 390.5,421.1 391.4,419.5 392.4,418.0 393.4,416.6 394.3,415.3 395.3,414.1 396.2,413.0 397.2,412.0 398.2,411.1 399.1,410.4 400.1,409.7 401.0,409.1 402.0,408.6 402.9,408.3 403.9,408.0 404.9,407.8 405.8,407.8 406.8,407.8 407.7,408.0 408.7,408.3 409.7,408.6 410.6,409.1 411.6,409.7 412.5,410.4 413.5,411.1 414.5,412.0 415.4,413.0 416.4,414.1 417.3,415.3 418.3,416.6 419.3,418.0 420.2,419.5 421.2,421.1 422.1,422.7 423.1,424.5 424.1,426.4 425.0,428.3 426.0,430.4 426.9,432.5 427.9,434.7 428.9,437.0 429.8,439.4 430.8,441.9 431.7,444.5 432.7,447.1 433.6,449.9 434.6,452.7 435.6,455.6 436.5,458.6 437.5,461.7 438.4,464.9 439.4,468.2 440.4,471.7 441.3,475.3 442.3,479.0 443.2,483.2 444.2,488.3" fill="none" stroke="#1890d8" stroke-width="1.6"/>
<polygon points="375.1,488.3 375.9,481.0 376.7,476.5 377.5,472.7 378.3,469.2 379.0,466.0 379.8,463.0 380.6,460.2 381.4,457.5 382.2,455.0 383.0,452.6 383.7,450.3 384.5,448.1 385.3,445.9 386.1,443.9 386.9,442.0 387.7,440.1 388.4,438.4 389.2,436.7 390.0,435.1 390.8,433.5 391.6,432.1 392.4,430.7 393.1,429.4 393.9,428.2 394.7,427.1 395.5,426.0 396.3,425.0 397.1,424.1 397.8,423.3 398.6,422.6 399.4,421.9 400.2,421.3 401.0,420.8 401.8,420.3 402.5,420.0 403.3,419.7 404.1,419.5 404.9,419.3 405.7,419.3 406.5,419.3 407.2,419.4 408.0,419.6 408.8,419.8 409.6,420.1 410.4,420.5 411.2,420.9 412.0,421.5 412.7,422.1 413.5,422.7 414.3,423.5 415.1,424.3 415.9,425.1 416.7,426.1 417.4,427.1 418.2,428.2 419.0,429.4 419.8,430.6 420.6,431.9 421.4,433.3 422.1,434.7 422.9,436.3 423.7,437.9 424.5,439.5 425.3,441.3 426.1,443.1 426.8,445.0 427.6,447.0 428.4,449.1 429.2,451.3 430.0,453.5 430.8,455.9 431.5,458.4 432.3,461.0 433.1,463.7 433.9,466.6 434.7,469.7 435.5,473.1 436.2,476.8 437.0,481.2 437.8,488.3" fill="#6b7d2c" stroke="#708838" stroke-width="1.5"/>
<polyline points="381.9,456.8 382.8,454.4 383.6,452.2 384.4,450.0 385.3,448.0 386.1,446.0 387.0,444.2 387.8,442.4 388.7,440.7 389.5,439.1 390.4,437.6 391.2,436.2 392.1,434.8 392.9,433.5 393.8,432.3 394.6,431.2 395.5,430.2 396.3,429.2 397.2,428.3 398.0,427.5 398.9,426.7 399.7,426.0 400.6,425.4 401.4,424.9 402.2,424.4 403.1,424.0 403.9,423.7 404.8,423.5 405.6,423.3 406.5,423.2 407.3,423.2 408.2,423.3 409.0,423.4 409.9,423.5 410.7,423.8 411.6,424.0 412.4,424.4 413.3,424.8 414.1,425.2 415.0,425.7 415.8,426.3 416.7,426.9 417.5,427.6 418.3,428.4 419.2,429.2 420.0,430.0 420.9,431.0 421.7,432.0 422.6,433.0 423.4,434.1 424.3,435.3 425.1,436.5 426.0,437.8 426.8,439.2 427.7,440.6 428.5,442.1 429.4,443.6 430.2,445.3 431.1,447.0 431.9,448.8 432.8,450.6 433.6,452.6 434.4,454.6 435.3,456.8" fill="none" stroke="#1010c8" stroke-width="1.6"/>
<line x1="334.2" y1="342.4" x2="334.2" y2="488.3" stroke="#000" stroke-width="1.2" stroke-dasharray="2.4,2.5" stroke-dashoffset="-1" opacity="0.9"/>
<line x1="340.6" y1="342.4" x2="340.6" y2="488.3" stroke="#000" stroke-width="1.2" stroke-dasharray="2.4,2.5" stroke-dashoffset="-1" opacity="0.9"/>
<line x1="347.0" y1="342.4" x2="347.0" y2="488.3" stroke="#000" stroke-width="1.2" stroke-dasharray="2.4,2.5" stroke-dashoffset="-1" opacity="0.9"/>
<line x1="353.4" y1="342.4" x2="353.4" y2="488.3" stroke="#000" stroke-width="1.2" stroke-dasharray="2.4,2.5" stroke-dashoffset="-1" opacity="0.9"/>
<line x1="359.8" y1="342.4" x2="359.8" y2="488.3" stroke="#000" stroke-width="1.2" stroke-dasharray="2.4,2.5" stroke-dashoffset="-1" opacity="0.9"/>
<line x1="366.2" y1="342.4" x2="366.2" y2="488.3" stroke="#000" stroke-width="1.2" stroke-dasharray="2.4,2.5" stroke-dashoffset="-1" opacity="0.9"/>
<line x1="372.6" y1="342.4" x2="372.6" y2="488.3" stroke="#000" stroke-width="1.2" stroke-dasharray="2.4,2.5" stroke-dashoffset="-1" opacity="0.9"/>
<line x1="379.0" y1="342.4" x2="379.0" y2="488.3" stroke="#000" stroke-width="1.2" stroke-dasharray="2.4,2.5" stroke-dashoffset="-1" opacity="0.9"/>
<line x1="385.4" y1="342.4" x2="385.4" y2="488.3" stroke="#000" stroke-width="1.2" stroke-dasharray="2.4,2.5" stroke-dashoffset="-1" opacity="0.9"/>
<line x1="391.8" y1="342.4" x2="391.8" y2="488.3" stroke="#000" stroke-width="1.2" stroke-dasharray="2.4,2.5" stroke-dashoffset="-1" opacity="0.9"/>
<line x1="398.2" y1="342.4" x2="398.2" y2="488.3" stroke="#000" stroke-width="1.2" stroke-dasharray="2.4,2.5" stroke-dashoffset="-1" opacity="0.9"/>
<line x1="404.5" y1="342.4" x2="404.5" y2="488.3" stroke="#000" stroke-width="1.2" stroke-dasharray="2.4,2.5" stroke-dashoffset="-1" opacity="0.9"/>
<line x1="410.9" y1="342.4" x2="410.9" y2="488.3" stroke="#000" stroke-width="1.2" stroke-dasharray="2.4,2.5" stroke-dashoffset="-1" opacity="0.9"/>
<line x1="417.3" y1="342.4" x2="417.3" y2="488.3" stroke="#000" stroke-width="1.2" stroke-dasharray="2.4,2.5" stroke-dashoffset="-1" opacity="0.9"/>
<line x1="423.7" y1="342.4" x2="423.7" y2="488.3" stroke="#000" stroke-width="1.2" stroke-dasharray="2.4,2.5" stroke-dashoffset="-1" opacity="0.9"/>
<line x1="430.1" y1="342.4" x2="430.1" y2="488.3" stroke="#000" stroke-width="1.2" stroke-dasharray="2.4,2.5" stroke-dashoffset="-1" opacity="0.9"/>
<line x1="436.5" y1="342.4" x2="436.5" y2="488.3" stroke="#000" stroke-width="1.2" stroke-dasharray="2.4,2.5" stroke-dashoffset="-1" opacity="0.9"/>
<line x1="442.9" y1="342.4" x2="442.9" y2="488.3" stroke="#000" stroke-width="1.2" stroke-dasharray="2.4,2.5" stroke-dashoffset="-1" opacity="0.9"/>
<line x1="449.3" y1="342.4" x2="449.3" y2="488.3" stroke="#000" stroke-width="1.2" stroke-dasharray="2.4,2.5" stroke-dashoffset="-1" opacity="0.9"/>
<line x1="455.7" y1="342.4" x2="455.7" y2="488.3" stroke="#000" stroke-width="1.2" stroke-dasharray="2.4,2.5" stroke-dashoffset="-1" opacity="0.9"/>
<line x1="462.1" y1="342.4" x2="462.1" y2="488.3" stroke="#000" stroke-width="1.2" stroke-dasharray="2.4,2.5" stroke-dashoffset="-1" opacity="0.9"/>
<line x1="468.5" y1="342.4" x2="468.5" y2="488.3" stroke="#000" stroke-width="1.2" stroke-dasharray="2.4,2.5" stroke-dashoffset="-1" opacity="0.9"/>
<line x1="327.8" y1="471.9" x2="474.9" y2="471.9" stroke="#000" stroke-width="1.1" stroke-dasharray="2.6,2.2" opacity="0.9"/>
<line x1="327.8" y1="455.4" x2="474.9" y2="455.4" stroke="#000" stroke-width="1.1" stroke-dasharray="2.6,2.2" opacity="0.9"/>
<line x1="327.8" y1="439.0" x2="474.9" y2="439.0" stroke="#000" stroke-width="1.1" stroke-dasharray="2.6,2.2" opacity="0.9"/>
<line x1="327.8" y1="422.6" x2="474.9" y2="422.6" stroke="#000" stroke-width="1.1" stroke-dasharray="2.6,2.2" opacity="0.9"/>
<line x1="327.8" y1="406.1" x2="474.9" y2="406.1" stroke="#000" stroke-width="1.1" stroke-dasharray="2.6,2.2" opacity="0.9"/>
<line x1="327.8" y1="389.7" x2="474.9" y2="389.7" stroke="#000" stroke-width="1.1" stroke-dasharray="2.6,2.2" opacity="0.9"/>
<line x1="327.8" y1="373.3" x2="474.9" y2="373.3" stroke="#000" stroke-width="1.1" stroke-dasharray="2.6,2.2" opacity="0.9"/>
<line x1="327.8" y1="356.8" x2="474.9" y2="356.8" stroke="#000" stroke-width="1.1" stroke-dasharray="2.6,2.2" opacity="0.9"/>
<polyline points="327.8,479.8 334.2,479.8 340.6,479.8 347.0,479.8 353.4,479.8 359.8,479.8 366.2,479.4 372.6,443.7 379.0,419.1 385.4,380.1 391.8,375.9 398.2,377.4 404.5,371.7 410.9,371.0 417.3,379.0 423.7,391.0 430.1,404.7 436.5,410.5 442.9,417.2 449.3,409.2 455.7,462.8 462.1,479.1 468.5,479.8 474.9,479.8" fill="none" stroke="#703890" stroke-width="2.0" stroke-linejoin="round"/>
<polyline points="327.8,479.8 334.2,479.8 340.6,479.8 347.0,479.8 353.4,479.8 359.8,479.8 366.2,479.4 372.6,444.6 379.0,420.0 385.4,378.9 391.8,381.0 398.2,378.9 404.5,373.7 410.9,370.4 417.3,378.6 423.7,393.6 430.1,401.5 436.5,414.2 442.9,414.6 449.3,409.8 455.7,463.3 462.1,479.1 468.5,479.8 474.9,479.8" fill="none" stroke="#a060c0" stroke-width="2.0" stroke-linejoin="round"/>
<polyline points="327.8,479.8 334.2,479.8 340.6,479.8 347.0,479.8 353.4,479.8 359.8,479.8 366.2,479.4 372.6,446.0 379.0,423.6 385.4,386.0 391.8,383.5 398.2,379.3 404.5,379.6 410.9,376.0 417.3,381.7 423.7,396.7 430.1,406.4 436.5,416.5 442.9,421.1 449.3,412.7 455.7,464.1 462.1,479.1 468.5,479.8 474.9,479.8" fill="none" stroke="#d060a0" stroke-width="2.0" stroke-linejoin="round"/>
<polyline points="327.8,479.8 334.2,479.8 340.6,479.8 347.0,479.8 353.4,479.8 359.8,479.8 366.2,479.4 372.6,442.7 379.0,415.8 385.4,376.4 391.8,375.4 398.2,372.3 404.5,369.8 410.9,369.0 417.3,372.9 423.7,388.0 430.1,401.8 436.5,408.2 442.9,413.3 449.3,403.4 455.7,462.3 462.1,479.1 468.5,479.8 474.9,479.8" fill="none" stroke="#b0405a" stroke-width="2.0" stroke-linejoin="round"/>
<polyline points="327.8,479.8 334.2,479.8 340.6,479.8 347.0,479.8 353.4,479.8 359.8,479.8 366.2,479.4 372.6,441.4 379.0,413.3 385.4,373.8 391.8,368.4 398.2,371.3 404.5,366.4 410.9,362.9 417.3,372.8 423.7,386.1 430.1,400.2 436.5,405.3 442.9,409.8 449.3,402.4 455.7,461.5 462.1,479.1 468.5,479.8 474.9,479.8" fill="none" stroke="#a03070" stroke-width="2.0" stroke-linejoin="round"/>
<polyline points="327.8,479.8 334.2,479.8 340.6,479.8 347.0,479.8 353.4,479.8 359.8,479.8 366.2,479.4 372.6,446.9 379.0,421.2 385.4,387.2 391.8,383.7 398.2,382.8 404.5,379.9 410.9,379.1 417.3,383.0 423.7,395.7 430.1,408.6 436.5,415.0 442.9,422.6 449.3,411.8 455.7,464.6 462.1,479.1 468.5,479.8 474.9,479.8" fill="none" stroke="#d86838" stroke-width="2.0" stroke-linejoin="round"/>
<polyline points="327.8,479.8 334.2,479.8 340.6,479.8 347.0,479.8 353.4,479.8 359.8,479.8 366.2,479.4 372.6,445.5 379.0,414.2 385.4,371.1 391.8,370.5 398.2,371.8 404.5,366.6 410.9,362.1 417.3,371.6 423.7,387.6 430.1,404.5 436.5,423.1 442.9,450.9 449.3,451.7 455.7,474.5 462.1,479.4 468.5,479.8 474.9,479.8" fill="none" stroke="#7a3090" stroke-width="2.0" stroke-linejoin="round"/>
<polyline points="327.8,480.4 334.2,480.4 340.6,480.4 347.0,480.4 353.4,480.4 359.8,480.4 366.2,480.1 372.6,449.6 379.0,425.8 385.4,394.6 391.8,392.6 398.2,389.1 404.5,389.0 410.9,393.5 417.3,399.1 423.7,407.4 430.1,415.8 436.5,423.6 442.9,429.9 449.3,430.8 455.7,472.2 462.1,479.8 468.5,480.4 474.9,480.4" fill="none" stroke="#f0a838" stroke-width="2.0" stroke-linejoin="round"/>
<polyline points="327.8,480.4 334.2,480.4 340.6,480.4 347.0,480.4 353.4,480.4 359.8,480.4 366.2,480.1 372.6,448.9 379.0,423.3 385.4,389.3 391.8,387.6 398.2,390.9 404.5,386.5 410.9,392.8 417.3,399.0 423.7,407.9 430.1,415.5 436.5,425.5 442.9,430.1 449.3,429.6 455.7,471.9 462.1,479.8 468.5,480.4 474.9,480.4" fill="none" stroke="#c09020" stroke-width="2.4" stroke-linejoin="round"/>
<polyline points="327.8,479.8 334.2,479.8 340.6,479.8 347.0,479.8 353.4,479.8 359.8,479.8 366.2,479.4 372.6,442.3 379.0,410.1 385.4,364.7 391.8,361.0 398.2,360.8 404.5,356.8 410.9,352.9 417.3,359.2 423.7,382.2 430.1,394.2 436.5,414.5 442.9,443.6 449.3,448.9 455.7,473.5 462.1,479.4 468.5,479.8 474.9,479.8" fill="none" stroke="#984020" stroke-width="2.2" stroke-linejoin="round"/>
<polyline points="327.8,479.8 334.2,479.8 340.6,479.8 347.0,479.8 353.4,479.8 359.8,479.8 366.2,479.4 372.6,436.2 379.0,404.3 385.4,361.9 391.8,363.5 398.2,359.1 404.5,357.2 410.9,354.9 417.3,359.7 423.7,377.8 430.1,394.8 436.5,406.1 442.9,411.2 449.3,413.7 455.7,457.4 462.1,479.1 468.5,479.8 474.9,479.8" fill="none" stroke="#f08838" stroke-width="2.4" stroke-linejoin="round"/>
<polyline points="327.8,479.8 334.2,479.8 340.6,479.8 347.0,479.8 353.4,479.8 359.8,479.8 366.2,479.4 372.6,435.7 379.0,404.9 385.4,360.8 391.8,362.6 398.2,356.5 404.5,352.9 410.9,353.1 417.3,358.1 423.7,375.7 430.1,393.7 436.5,404.8 442.9,405.9 449.3,408.5 455.7,457.1 462.1,479.1 468.5,479.8 474.9,479.8" fill="none" stroke="#602038" stroke-width="2.6" stroke-linejoin="round"/>
<polyline points="327.8,479.8 334.2,479.8 340.6,479.8 347.0,479.8 353.4,479.8 359.8,479.8 366.2,479.4 372.6,437.0 379.0,405.2 385.4,363.4 391.8,365.5 398.2,363.8 404.5,357.7 410.9,355.9 417.3,358.4 423.7,379.5 430.1,397.9 436.5,402.6 442.9,409.6 449.3,414.9 455.7,457.9 462.1,479.1 468.5,479.8 474.9,479.8" fill="none" stroke="#c05818" stroke-width="3.0" stroke-linejoin="round"/>
<path d="M327.8 340.4V488.8H474.9V340.4H327.8" fill="none" stroke="#000" stroke-width="1"/>
<line x1="328.3" y1="488.6" x2="474.9" y2="488.6" stroke="#6b8a30" stroke-width="2.4"/>
<line x1="321.8" y1="488.3" x2="327.8" y2="488.3" stroke="#000" stroke-width="1"/>
<text x="317.8" y="489.8" font-size="4.2" fill="#8a92a4" text-anchor="end" font-family="Liberation Sans">0</text>
<line x1="321.8" y1="471.9" x2="327.8" y2="471.9" stroke="#000" stroke-width="1"/>
<text x="317.8" y="473.4" font-size="4.2" fill="#8a92a4" text-anchor="end" font-family="Liberation Sans">5000</text>
<line x1="321.8" y1="455.4" x2="327.8" y2="455.4" stroke="#000" stroke-width="1"/>
<text x="317.8" y="456.9" font-size="4.2" fill="#8a92a4" text-anchor="end" font-family="Liberation Sans">10000</text>
<line x1="321.8" y1="439.0" x2="327.8" y2="439.0" stroke="#000" stroke-width="1"/>
<text x="317.8" y="440.5" font-size="4.2" fill="#8a92a4" text-anchor="end" font-family="Liberation Sans">15000</text>
<line x1="321.8" y1="422.6" x2="327.8" y2="422.6" stroke="#000" stroke-width="1"/>
<text x="317.8" y="424.1" font-size="4.2" fill="#8a92a4" text-anchor="end" font-family="Liberation Sans">20000</text>
<line x1="321.8" y1="406.1" x2="327.8" y2="406.1" stroke="#000" stroke-width="1"/>
<text x="317.8" y="407.6" font-size="4.2" fill="#8a92a4" text-anchor="end" font-family="Liberation Sans">25000</text>
<line x1="321.8" y1="389.7" x2="327.8" y2="389.7" stroke="#000" stroke-width="1"/>
<text x="317.8" y="391.2" font-size="4.2" fill="#8a92a4" text-anchor="end" font-family="Liberation Sans">30000</text>
<line x1="321.8" y1="373.3" x2="327.8" y2="373.3" stroke="#000" stroke-width="1"/>
<text x="317.8" y="374.8" font-size="4.2" fill="#8a92a4" text-anchor="end" font-family="Liberation Sans">35000</text>
<line x1="321.8" y1="356.8" x2="327.8" y2="356.8" stroke="#000" stroke-width="1"/>
<text x="317.8" y="358.3" font-size="4.2" fill="#8a92a4" text-anchor="end" font-family="Liberation Sans">40000</text>
<line x1="321.8" y1="340.4" x2="327.8" y2="340.4" stroke="#000" stroke-width="1"/>
<text x="317.8" y="341.9" font-size="4.2" fill="#8a92a4" text-anchor="end" font-family="Liberation Sans">45000</text>
<line x1="327.8" y1="486.6" x2="327.8" y2="492.8" stroke="#000" stroke-width="1"/>
<text transform="translate(326.2,497.1) rotate(90)" font-size="4.4" fill="#7a8090" font-family="Liberation Sans">00:00</text>
<line x1="334.2" y1="486.6" x2="334.2" y2="492.8" stroke="#000" stroke-width="1"/>
<text transform="translate(332.6,497.1) rotate(90)" font-size="4.4" fill="#7a8090" font-family="Liberation Sans">01:00</text>
<line x1="340.6" y1="486.6" x2="340.6" y2="492.8" stroke="#000" stroke-width="1"/>
<text transform="translate(339.0,497.1) rotate(90)" font-size="4.4" fill="#7a8090" font-family="Liberation Sans">02:00</text>
<line x1="347.0" y1="486.6" x2="347.0" y2="492.8" stroke="#000" stroke-width="1"/>
<text transform="translate(345.4,497.1) rotate(90)" font-size="4.4" fill="#7a8090" font-family="Liberation Sans">03:00</text>
<line x1="353.4" y1="486.6" x2="353.4" y2="492.8" stroke="#000" stroke-width="1"/>
<text transform="translate(351.8,497.1) rotate(90)" font-size="4.4" fill="#7a8090" font-family="Liberation Sans">04:00</text>
<line x1="359.8" y1="486.6" x2="359.8" y2="492.8" stroke="#000" stroke-width="1"/>
<text transform="translate(358.2,497.1) rotate(90)" font-size="4.4" fill="#7a8090" font-family="Liberation Sans">05:00</text>
<line x1="366.2" y1="486.6" x2="366.2" y2="492.8" stroke="#000" stroke-width="1"/>
<text transform="translate(364.6,497.1) rotate(90)" font-size="4.4" fill="#7a8090" font-family="Liberation Sans">06:00</text>
<line x1="372.6" y1="486.6" x2="372.6" y2="492.8" stroke="#000" stroke-width="1"/>
<text transform="translate(371.0,497.1) rotate(90)" font-size="4.4" fill="#7a8090" font-family="Liberation Sans">07:00</text>
<line x1="379.0" y1="486.6" x2="379.0" y2="492.8" stroke="#000" stroke-width="1"/>
<text transform="translate(377.4,497.1) rotate(90)" font-size="4.4" fill="#7a8090" font-family="Liberation Sans">08:00</text>
<line x1="385.4" y1="486.6" x2="385.4" y2="492.8" stroke="#000" stroke-width="1"/>
<text transform="translate(383.8,497.1) rotate(90)" font-size="4.4" fill="#7a8090" font-family="Liberation Sans">09:00</text>
<line x1="391.8" y1="486.6" x2="391.8" y2="492.8" stroke="#000" stroke-width="1"/>
<text transform="translate(390.2,497.1) rotate(90)" font-size="4.4" fill="#7a8090" font-family="Liberation Sans">10:00</text>
<line x1="398.2" y1="486.6" x2="398.2" y2="492.8" stroke="#000" stroke-width="1"/>
<text transform="translate(396.6,497.1) rotate(90)" font-size="4.4" fill="#7a8090" font-family="Liberation Sans">11:00</text>
<line x1="404.5" y1="486.6" x2="404.5" y2="492.8" stroke="#000" stroke-width="1"/>
<text transform="translate(402.9,497.1) rotate(90)" font-size="4.4" fill="#7a8090" font-family="Liberation Sans">12:00</text>
<line x1="410.9" y1="486.6" x2="410.9" y2="492.8" stroke="#000" stroke-width="1"/>
<text transform="translate(409.3,497.1) rotate(90)" font-size="4.4" fill="#7a8090" font-family="Liberation Sans">13:00</text>
<line x1="417.3" y1="486.6" x2="417.3" y2="492.8" stroke="#000" stroke-width="1"/>
<text transform="translate(415.7,497.1) rotate(90)" font-size="4.4" fill="#7a8090" font-family="Liberation Sans">14:00</text>
<line x1="423.7" y1="486.6" x2="423.7" y2="492.8" stroke="#000" stroke-width="1"/>
<text transform="translate(422.1,497.1) rotate(90)" font-size="4.4" fill="#7a8090" font-family="Liberation Sans">15:00</text>
<line x1="430.1" y1="486.6" x2="430.1" y2="492.8" stroke="#000" stroke-width="1"/>
<text transform="translate(428.5,497.1) rotate(90)" font-size="4.4" fill="#7a8090" font-family="Liberation Sans">16:00</text>
<line x1="436.5" y1="486.6" x2="436.5" y2="492.8" stroke="#000" stroke-width="1"/>
<text transform="translate(434.9,497.1) rotate(90)" font-size="4.4" fill="#7a8090" font-family="Liberation Sans">17:00</text>
<line x1="442.9" y1="486.6" x2="442.9" y2="492.8" stroke="#000" stroke-width="1"/>
<text transform="translate(441.3,497.1) rotate(90)" font-size="4.4" fill="#7a8090" font-family="Liberation Sans">18:00</text>
<line x1="449.3" y1="486.6" x2="449.3" y2="492.8" stroke="#000" stroke-width="1"/>
<text transform="translate(447.7,497.1) rotate(90)" font-size="4.4" fill="#7a8090" font-family="Liberation Sans">19:00</text>
<line x1="455.7" y1="486.6" x2="455.7" y2="492.8" stroke="#000" stroke-width="1"/>
<text transform="translate(454.1,497.1) rotate(90)" font-size="4.4" fill="#7a8090" font-family="Liberation Sans">20:00</text>
<line x1="462.1" y1="486.6" x2="462.1" y2="492.8" stroke="#000" stroke-width="1"/>
<text transform="translate(460.5,497.1) rotate(90)" font-size="4.4" fill="#7a8090" font-family="Liberation Sans">21:00</text>
<line x1="468.5" y1="486.6" x2="468.5" y2="492.8" stroke="#000" stroke-width="1"/>
<text transform="translate(466.9,497.1) rotate(90)" font-size="4.4" fill="#7a8090" font-family="Liberation Sans">22:00</text>
<line x1="474.9" y1="486.6" x2="474.9" y2="492.8" stroke="#000" stroke-width="1"/>
<text transform="translate(473.3,497.1) rotate(90)" font-size="4.4" fill="#7a8090" font-family="Liberation Sans">23:00</text>
<text x="323.5" y="332" font-size="4.5" fill="#333" font-family="Liberation Sans" font-weight="bold">Wh</text>
<text x="396" y="521" font-size="4.5" fill="#333" font-family="Liberation Sans" font-weight="bold">Hora</text>
<rect x="501" y="339.5" width="15" height="2.2" fill="#b0405a"/>
<text transform="translate(519,342.1) scale(0.86,1)" font-size="4.6" fill="#b0405a" opacity="0.75" font-family="Liberation Sans">Consumo Enero</text>
<rect x="501" y="346.2" width="15" height="2.2" fill="#1010c8"/>
<text transform="translate(519,348.8) scale(0.86,1)" font-size="4.6" fill="#1010c8" opacity="0.75" font-family="Liberation Sans">Producción Enero</text>
<rect x="501" y="352.8" width="15" height="2.2" fill="#a060c0"/>
<text transform="translate(519,355.4) scale(0.86,1)" font-size="4.6" fill="#a060c0" opacity="0.75" font-family="Liberation Sans">Consumo Febrero</text>
<rect x="501" y="359.5" width="15" height="2.2" fill="#1890d8"/>
<text transform="translate(519,362.1) scale(0.86,1)" font-size="4.6" fill="#1890d8" opacity="0.75" font-family="Liberation Sans">Producción Febrero</text>
<rect x="501" y="366.2" width="15" height="2.2" fill="#d86838"/>
<text transform="translate(519,368.8) scale(0.86,1)" font-size="4.6" fill="#d86838" opacity="0.75" font-family="Liberation Sans">Consumo Marzo</text>
<rect x="501" y="372.9" width="15" height="2.2" fill="#20c8d8"/>
<text transform="translate(519,375.5) scale(0.86,1)" font-size="4.6" fill="#20c8d8" opacity="0.75" font-family="Liberation Sans">Producción Marzo</text>
<rect x="501" y="379.5" width="15" height="2.2" fill="#f0a838"/>
<text transform="translate(519,382.1) scale(0.86,1)" font-size="4.6" fill="#f0a838" opacity="0.75" font-family="Liberation Sans">Consumo Abril</text>
<rect x="501" y="386.2" width="15" height="2.2" fill="#28c890"/>
<text transform="translate(519,388.8) scale(0.86,1)" font-size="4.6" fill="#28c890" opacity="0.75" font-family="Liberation Sans">Producción Abril</text>
<rect x="501" y="392.9" width="15" height="2.2" fill="#d060a0"/>
<text transform="translate(519,395.5) scale(0.86,1)" font-size="4.6" fill="#d060a0" opacity="0.75" font-family="Liberation Sans">Consumo Mayo</text>
<rect x="501" y="399.5" width="15" height="2.2" fill="#68c058"/>
<text transform="translate(519,402.1) scale(0.86,1)" font-size="4.6" fill="#68c058" opacity="0.75" font-family="Liberation Sans">Producción Mayo</text>
<rect x="501" y="406.2" width="15" height="2.2" fill="#f08838"/>
<text transform="translate(519,408.8) scale(0.86,1)" font-size="4.6" fill="#f08838" opacity="0.75" font-family="Liberation Sans">Consumo Junio</text>
<rect x="501" y="412.9" width="15" height="2.2" fill="#a0b848"/>
<text transform="translate(519,415.5) scale(0.86,1)" font-size="4.6" fill="#a0b848" opacity="0.75" font-family="Liberation Sans">Producción Junio</text>
<rect x="501" y="419.5" width="15" height="2.2" fill="#602038"/>
<text transform="translate(519,422.1) scale(0.86,1)" font-size="4.6" fill="#602038" opacity="0.75" font-family="Liberation Sans">Consumo Julio</text>
<rect x="501" y="426.2" width="15" height="2.2" fill="#204880"/>
<text transform="translate(519,428.8) scale(0.86,1)" font-size="4.6" fill="#204880" opacity="0.75" font-family="Liberation Sans">Producción Julio</text>
<rect x="501" y="432.9" width="15" height="2.2" fill="#703890"/>
<text transform="translate(519,435.5) scale(0.86,1)" font-size="4.6" fill="#703890" opacity="0.75" font-family="Liberation Sans">Consumo Agosto</text>
<rect x="501" y="439.6" width="15" height="2.2" fill="#1a6890"/>
<text transform="translate(519,442.2) scale(0.86,1)" font-size="4.6" fill="#1a6890" opacity="0.75" font-family="Liberation Sans">Producción Agosto</text>
<rect x="501" y="446.2" width="15" height="2.2" fill="#984020"/>
<text transform="translate(519,448.8) scale(0.86,1)" font-size="4.6" fill="#984020" opacity="0.75" font-family="Liberation Sans">Consumo Septiembre</text>
<rect x="501" y="452.9" width="15" height="2.2" fill="#108890"/>
<text transform="translate(519,455.5) scale(0.86,1)" font-size="4.6" fill="#108890" opacity="0.75" font-family="Liberation Sans">Producción Septiembre</text>
<rect x="501" y="459.6" width="15" height="2.2" fill="#c09020"/>
<text transform="translate(519,462.2) scale(0.86,1)" font-size="4.6" fill="#c09020" opacity="0.75" font-family="Liberation Sans">Consumo Octubre</text>
<rect x="501" y="466.2" width="15" height="2.2" fill="#208060"/>
<text transform="translate(519,468.8) scale(0.86,1)" font-size="4.6" fill="#208060" opacity="0.75" font-family="Liberation Sans">Producción Octubre</text>
<rect x="501" y="472.9" width="15" height="2.2" fill="#a03070"/>
<text transform="translate(519,475.5) scale(0.86,1)" font-size="4.6" fill="#a03070" opacity="0.75" font-family="Liberation Sans">Consumo Noviembre</text>
<rect x="501" y="479.6" width="15" height="2.2" fill="#409838"/>
<text transform="translate(519,482.2) scale(0.86,1)" font-size="4.6" fill="#409838" opacity="0.75" font-family="Liberation Sans">Producción Noviembre</text>
<rect x="501" y="486.2" width="15" height="2.2" fill="#c05818"/>
<text transform="translate(519,488.8) scale(0.86,1)" font-size="4.6" fill="#c05818" opacity="0.75" font-family="Liberation Sans">Consumo Diciembre</text>
<rect x="501" y="492.9" width="15" height="2.2" fill="#708838"/>
<text transform="translate(519,495.5) scale(0.86,1)" font-size="4.6" fill="#708838" opacity="0.75" font-family="Liberation Sans">Producción Diciembre</text>
<rect x="501.5" y="499.0" width="14.5" height="4.6" fill="#0818c0" stroke="#111" stroke-width="1"/>
<text transform="translate(519,502.8) scale(0.86,1)" font-size="4.6" fill="#555" font-family="Liberation Sans">Enero</text>
<rect x="501.5" y="505.6" width="14.5" height="4.6" fill="#18a0e0" stroke="#111" stroke-width="1"/>
<text transform="translate(519,509.4) scale(0.86,1)" font-size="4.6" fill="#555" font-family="Liberation Sans">Febrero</text>
<rect x="501.5" y="512.2" width="14.5" height="4.6" fill="#18c8d8" stroke="#111" stroke-width="1"/>
<text transform="translate(519,516.0) scale(0.86,1)" font-size="4.6" fill="#555" font-family="Liberation Sans">Marzo</text>
<rect x="501.5" y="518.8" width="14.5" height="4.6" fill="#20d898" stroke="#111" stroke-width="1"/>
<text transform="translate(519,522.6) scale(0.86,1)" font-size="4.6" fill="#555" font-family="Liberation Sans">Abril</text>
</svg>
<div class="a" style="left:3px;top:537px;width:1018px;height:1px;background:#d2d2d2"></div>
<div class="a" style="left:3px;top:538px;width:1018px;height:31px;background:#e6e6e6"></div>
<div class="a" style="left:483px;top:543px;width:58px;height:20px;background:#e1e1e1;border:2px solid #2a7dd6"></div>
<div class="t" style="left:495.60px;top:548.00px;transform-origin:0 50%;transform:scaleX(0.8751);">Aceptar</div>
</body></html>
